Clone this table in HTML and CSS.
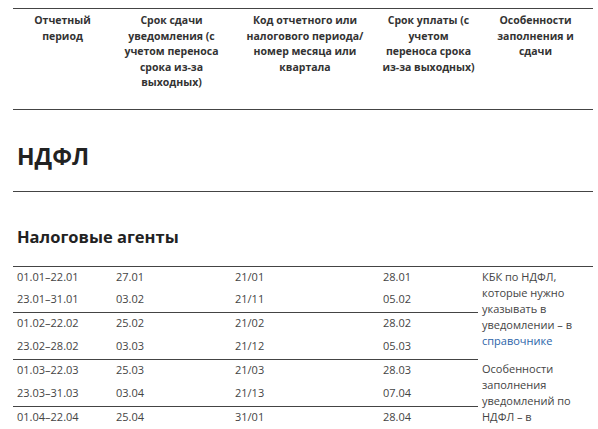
FILE: index.html
```html
<!DOCTYPE html>
<html lang="ru">
<head>
<meta charset="utf-8">
<link rel="stylesheet" href="styles.css">
</head>
<body>
<table class="tax">
  <colgroup>
    <col class="c1"><col class="c2"><col class="c3"><col class="c4"><col class="c5">
  </colgroup>
  <thead>
    <tr class="head">
      <th>Отчетный<br>период</th>
      <th>Срок сдачи<br>уведомления (с<br>учетом переноса<br>срока из-за<br>выходных)</th>
      <th>Код отчетного или<br>налогового периода/<br>номер месяца или<br>квартала</th>
      <th>Срок уплаты (с<br>учетом<br>переноса срока<br>из-за выходных)</th>
      <th>Особенности<br>заполнения и<br>сдачи</th>
    </tr>
  </thead>
  <tbody>
    <tr class="section"><td colspan="5"><h2 class="title">НДФЛ</h2></td></tr>
    <tr class="subsection"><td colspan="5"><h3 class="subtitle">Налоговые агенты</h3></td></tr>
    <tr class="row first">
      <td>01.01–22.01</td><td>27.01</td><td>21/01</td><td>28.01</td>
      <td class="note" rowspan="4">КБК по НДФЛ,<br>которые нужно<br>указывать в<br>уведомлении – в<br><a class="link" href="#">справочнике</a></td>
    </tr>
    <tr class="row">
      <td>23.01–31.01</td><td>03.02</td><td>21/11</td><td>05.02</td>
    </tr>
    <tr class="row group">
      <td>01.02–22.02</td><td>25.02</td><td>21/02</td><td>28.02</td>
    </tr>
    <tr class="row">
      <td>23.02–28.02</td><td>03.03</td><td>21/12</td><td>05.03</td>
    </tr>
    <tr class="row group">
      <td>01.03–22.03</td><td>25.03</td><td>21/03</td><td>28.03</td>
      <td class="note" rowspan="3">Особенности<br>заполнения<br>уведомлений по<br>НДФЛ – в</td>
    </tr>
    <tr class="row">
      <td>23.03–31.03</td><td>03.04</td><td>21/13</td><td>07.04</td>
    </tr>
    <tr class="row group">
      <td>01.04–22.04</td><td>25.04</td><td>31/01</td><td>28.04</td>
    </tr>
  </tbody>
</table>
</body>
</html>
```

FILE: styles.css
```css
html, body {
  margin: 0;
  padding: 0;
  background: #ffffff;
}

body {
  padding: 8px 5px 0 13px;
  font-family: "Open Sans", "Liberation Sans", sans-serif;
  color: #333333;
  overflow: hidden;
}

.tax {
  border-collapse: collapse;
  width: 580px;
  table-layout: fixed;
}

.c1 { width: 99px; }
.c2 { width: 119px; }
.c3 { width: 148px; }
.c4 { width: 99px; }
.c5 { width: 115px; }

.head th {
  border-top: 1px solid #444;
  border-bottom: 1px solid #444;
  font-size: 10.5px;
  font-weight: 700;
  line-height: 15.5px;
  text-align: center;
  vertical-align: top;
  padding: 4px 0 18px;
  color: #333;
  height: 77px;
}

.section td {
  padding: 32px 0 21px 4px;
  border-bottom: 1px solid #444;
}

.title {
  margin: 0;
  font-size: 23px;
  line-height: 28px;
  font-weight: 700;
  color: #222;
}

.subsection td {
  padding: 34px 0 18px 4px;
  border-bottom: 1px solid #444;
}

.subtitle {
  margin: 0;
  font-size: 16.5px;
  line-height: 22px;
  font-weight: 700;
  color: #222;
}

.row td {
  font-size: 11px;
  line-height: 16px;
  padding: 2px 4px 4.8px;
  height: 16px;
  vertical-align: top;
  color: #444;
}

.row.group td {
  border-top: 1px solid #444;
}

.row.group td.note {
  border-top: 0;
}

.note {
  line-height: 16.2px;
}

.link {
  color: #2b64a8;
  text-decoration: none;
}
```
